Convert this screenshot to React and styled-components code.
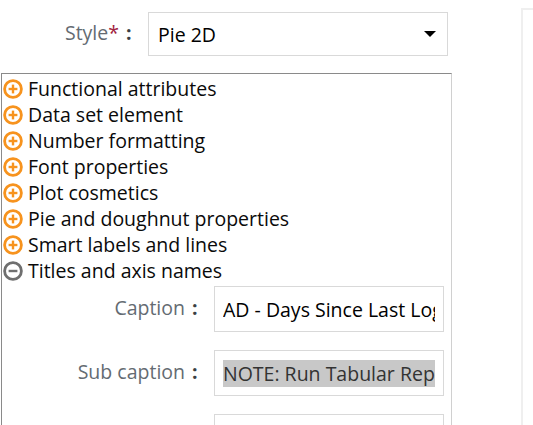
import React from "react";
import styled, { createGlobalStyle } from "styled-components";

const GlobalStyle = createGlobalStyle`
  html, body {
    margin: 0;
    padding: 0;
    background: #ffffff;
    overflow: hidden;
  }
  body {
    font-family: "Open Sans", "Liberation Sans", sans-serif;
  }
`;

const Page = styled.div`
  width: 533px;
  height: 425px;
  display: flex;
  flex-direction: row;
  overflow: hidden;
`;

const Main = styled.div`
  width: 452px;
  display: flex;
  flex-direction: column;
  padding: 12px 0 0 1px;
  box-sizing: border-box;
`;

const FieldRow = styled.div`
  display: flex;
  flex-direction: row;
  align-items: center;
  margin-bottom: ${(p) => p.$gap || 0}px;
`;

const Label = styled.div`
  width: ${(p) => p.$width}px;
  flex-shrink: 0;
  text-align: right;
  color: #646b72;
  font-size: 19.5px;
  white-space: nowrap;
  margin-top: -3px;
`;

const Required = styled.span`
  color: #a1213d;
`;

const Colon = styled.span`
  display: inline-block;
  width: 29px;
  padding-left: 7px;
  box-sizing: border-box;
  text-align: left;
  color: #3a3f45;
  font-weight: 700;
`;

const Select = styled.div`
  width: 300px;
  height: 44px;
  border: 1px solid #d9d9d9;
  box-sizing: border-box;
  display: flex;
  align-items: center;
  justify-content: space-between;
  padding: 0 11px 0 9px;
  font-size: 19.5px;
  color: #000;
`;

const Caret = styled.span`
  width: 0;
  height: 0;
  border-left: 6px solid transparent;
  border-right: 6px solid transparent;
  border-top: 6px solid #000;
`;

const Panel = styled.div`
  margin-top: 17px;
  flex: 1;
  border-top: 1px solid #8a8a8a;
  border-left: 1px solid #8a8a8a;
  border-right: 1px solid #d0d0d0;
  padding-top: 1px;
  box-sizing: border-box;
`;

const Item = styled.div`
  display: flex;
  align-items: center;
  height: 26px;
  font-size: 19.5px;
  color: #0a0a0a;
  white-space: nowrap;
  overflow: hidden;
`;

const IconSvg = styled.svg`
  display: block;
  width: 20px;
  height: 20px;
  min-width: 20px;
  margin: 1px 5px 0 1px;
  flex: 0 0 20px;
`;

const Fields = styled.div`
  padding-top: 3px;
`;

const TextBox = styled.div`
  width: 230px;
  height: 46px;
  border: 1px solid #d9d9d9;
  box-sizing: border-box;
  display: flex;
  align-items: center;
  padding: 0 8px;
  font-size: 19.5px;
  color: #000;
`;

const Clip = styled.div`
  flex: 1;
  overflow: hidden;
  white-space: nowrap;
`;

const Selected = styled.span`
  background: #c8c8c8;
  color: #333;
  line-height: 26px;
  padding-right: 8px;
`;

const Side = styled.div`
  margin: 8px 0 0 69px;
  flex: 1;
  border-top: 2px solid #efefef;
  border-left: 2px solid #efefef;
`;

const ToggleIcon = ({ open }) => {
  const c = open ? "#6f6f6f" : "#f7931e";
  return (
    <IconSvg width="20" height="20" viewBox="0 0 20 20">
      <circle cx="10" cy="10" r="8.4" fill="none" stroke={c} strokeWidth="2.8" />
      <line x1="5.6" y1="10" x2="14.4" y2="10" stroke={c} strokeWidth="2.4" />
      {!open && <line x1="10" y1="5.6" x2="10" y2="14.4" stroke={c} strokeWidth="2.4" />}
    </IconSvg>
  );
};

const sections = [
  "Functional attributes",
  "Data set element",
  "Number formatting",
  "Font properties",
  "Plot cosmetics",
  "Pie and doughnut properties",
  "Smart labels and lines",
];

export default function App() {
  return (
    <>
      <GlobalStyle />
      <Page>
        <Main>
          <FieldRow>
            <Label $width={147}>
              Style<Required>*</Required>
              <Colon>:</Colon>
            </Label>
            <Select>
              <span>Pie 2D</span>
              <Caret />
            </Select>
          </FieldRow>
          <Panel>
            {sections.map((s) => (
              <Item key={s}>
                <ToggleIcon />
                {s}
              </Item>
            ))}
            <Item>
              <ToggleIcon open />
              Titles and axis names
            </Item>
            <Fields>
              <FieldRow $gap={18}>
                <Label $width={212}>
                  Caption<Colon>:</Colon>
                </Label>
                <TextBox>
                  <Clip>AD - Days Since Last Login</Clip>
                </TextBox>
              </FieldRow>
              <FieldRow $gap={18}>
                <Label $width={212}>
                  Sub caption<Colon>:</Colon>
                </Label>
                <TextBox>
                  <Clip>
                    <Selected>NOTE: Run Tabular Report</Selected>
                  </Clip>
                </TextBox>
              </FieldRow>
              <FieldRow>
                <Label $width={212} />
                <TextBox />
              </FieldRow>
            </Fields>
          </Panel>
        </Main>
        <Side />
      </Page>
    </>
  );
}
